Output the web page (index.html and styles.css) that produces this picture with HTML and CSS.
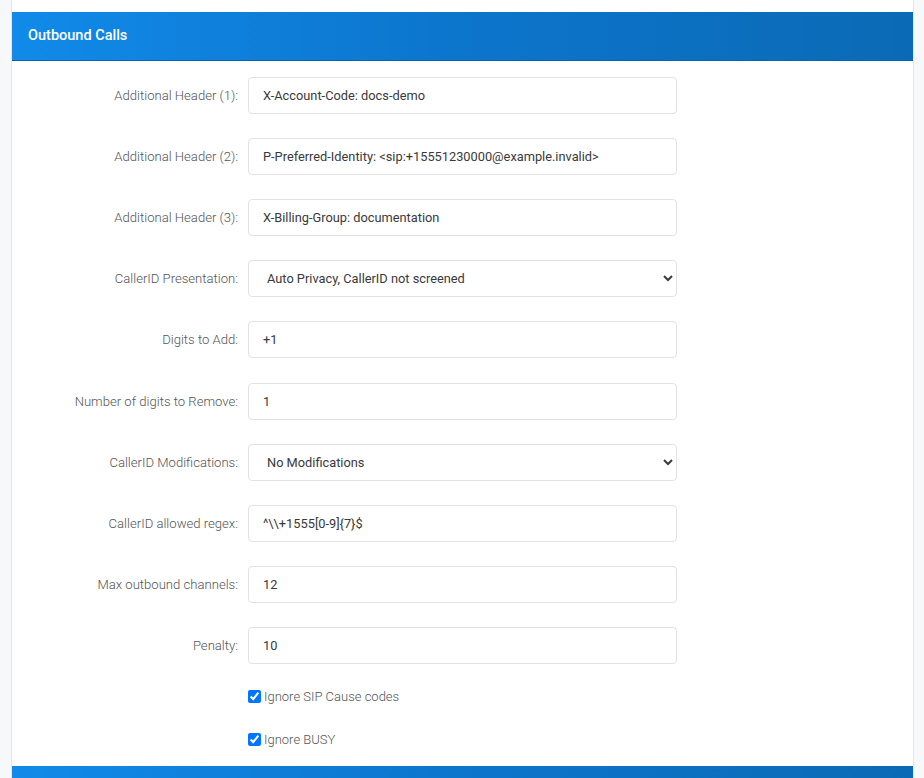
FILE: index.html
```html
<!DOCTYPE html>
<html>
<head>
    <meta charset="utf-8">
    <title>Outbound Calls</title>
    <link rel="stylesheet" href="styles.css">
</head>
<body>
    <div class="card">
        <div class="card-header">Outbound Calls</div>
        <div class="card-body">
            <div class="form-row">
                <label for="hdr1">Additional Header (1):</label>
                <input type="text" id="hdr1" value="X-Account-Code: docs-demo">
            </div>
            <div class="form-row">
                <label for="hdr2">Additional Header (2):</label>
                <input type="text" id="hdr2" value="P-Preferred-Identity: <sip:+15551230000@example.invalid>">
            </div>
            <div class="form-row">
                <label for="hdr3">Additional Header (3):</label>
                <input type="text" id="hdr3" value="X-Billing-Group: documentation">
            </div>
            <div class="form-row">
                <label for="presentation">CallerID Presentation:</label>
                <select id="presentation">
                    <option>Auto Privacy, CallerID not screened</option>
                    <option>Allowed, not screened</option>
                    <option>Prohibited</option>
                </select>
            </div>
            <div class="form-row">
                <label for="add-digits">Digits to Add:</label>
                <input type="text" id="add-digits" value="+1">
            </div>
            <div class="form-row">
                <label for="remove-digits">Number of digits to Remove:</label>
                <input type="text" id="remove-digits" value="1">
            </div>
            <div class="form-row">
                <label for="modifications">CallerID Modifications:</label>
                <select id="modifications">
                    <option>No Modifications</option>
                    <option>Remove prefix</option>
                </select>
            </div>
            <div class="form-row">
                <label for="regex">CallerID allowed regex:</label>
                <input type="text" id="regex" value="^\\+1555[0-9]{7}$">
            </div>
            <div class="form-row">
                <label for="channels">Max outbound channels:</label>
                <input type="text" id="channels" value="12">
            </div>
            <div class="form-row">
                <label for="penalty">Penalty:</label>
                <input type="text" id="penalty" value="10">
            </div>
            <div class="check-row">
                <label><input type="checkbox" checked> Ignore SIP Cause codes</label>
            </div>
            <div class="check-row">
                <label><input type="checkbox" checked> Ignore BUSY</label>
            </div>
        </div>
        <div class="card-header"></div>
    </div>
</body>
</html>
```

FILE: styles.css
```css
html {
    overflow: hidden;
}

html, body {
    margin: 0;
    background: #f7f8fa;
}

body {
    padding: 0 10px 0 11px;
    font-family: Roboto, "Liberation Sans", sans-serif;
    font-size: 12.8px;
    color: #333;
}

.card {
    background: #fff;
    border-left: 1px solid #e4e6e9;
    border-right: 1px solid #e4e6e9;
    padding-top: 12px;
}

.card-header {
    height: 49px;
    box-sizing: border-box;
    padding: 0 16px;
    line-height: 48px;
    font-size: 14.5px;
    font-weight: 500;
    color: #fff;
    background: linear-gradient(90deg, #118ae9 0%, #0c75cc 50%, #0b6ab5 100%);
    border-bottom: 1px solid #0a63ab;
}

.card-body {
    padding: 16px 0 0;
}

.form-row {
    display: grid;
    grid-template-columns: 226px 429px;
    column-gap: 10px;
    align-items: center;
    margin-bottom: 24.11px;
}

.form-row label {
    text-align: right;
    font-size: 13.1px;
    font-weight: 300;
    color: #555;
}

.form-row input, .form-row select {
    height: 37px;
    box-sizing: border-box;
    border: 1px solid #e2e2e2;
    border-radius: 4px;
    padding: 0 14px;
    font-family: inherit;
    font-size: 12.8px;
    color: #3a3a3a;
    background: #fff;
}

.form-row select {
    padding: 0 10px 0 14px;
}

.check-row {
    padding-left: 236px;
    margin-bottom: 27px;
    font-size: 13px;
    font-weight: 300;
    color: #555;
}

.check-row:last-child {
    margin-bottom: 19px;
}

.check-row label {
    display: flex;
    align-items: center;
    gap: 3px;
    height: 16px;
}

.check-row input {
    margin: 0;
    width: 13px;
    height: 13px;
}
```
